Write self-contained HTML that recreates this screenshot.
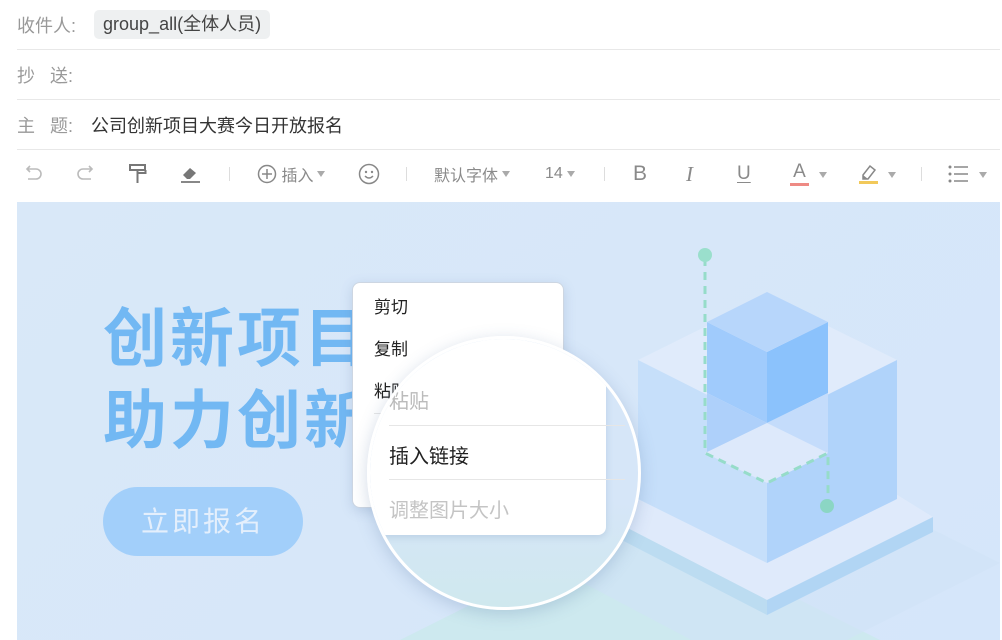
<!DOCTYPE html>
<html><head><meta charset="utf-8"><style>
*{margin:0;padding:0;box-sizing:border-box}
html,body{width:1002px;height:640px;overflow:hidden}
body{background:#fff;font-family:"Liberation Sans","Noto Sans CJK SC",sans-serif;position:relative;color:#333}
.row{position:absolute;left:17px;width:983px;height:50px;border-bottom:1px solid #e8e8e8;font-size:18px;color:#999;display:flex;align-items:center}
.tag{background:#eef0f1;color:#444;border-radius:5px;padding:0 9px;height:29px;line-height:29px;margin-left:18px;font-size:18px}
.tb{position:absolute;top:150px;left:0;width:1002px;height:50px;color:#8a8a8a;font-size:16px}
.tb>*{position:absolute;top:0;height:48px;display:flex;align-items:center}
.sep{width:1px;height:14px!important;top:17px!important;background:#ddd}
.ar{display:inline-block;border-left:4px solid transparent;border-right:4px solid transparent;border-top:6px solid #aaa;margin-left:4px}
.ban{position:absolute;left:17px;top:202px;width:983px;height:438px;background:linear-gradient(135deg,#d9e8f8,#d5e6fa);overflow:hidden}
.big{position:absolute;left:86px;font-size:64px;font-weight:bold;color:#72b8f3;letter-spacing:3px;line-height:82px}
.btn{position:absolute;left:86px;top:285px;width:200px;height:69px;border-radius:35px;background:#a2cffa;color:#e4effc;font-size:28px;text-align:center;line-height:69px;letter-spacing:3px}
.menu{position:absolute;left:352px;top:282px;width:212px;height:226px;background:#fff;border-radius:8px;border:1px solid #cdd6e2;box-shadow:0 3px 12px rgba(80,110,160,.2);font-size:17px;color:#222}
.menu div{position:absolute;left:21px}
.hr{position:absolute;left:0;width:100%;height:1px;background:#e6e6e6}
.mag{position:absolute;left:367px;top:336px;width:274px;height:274px;border-radius:50%;border:3px solid #fff;overflow:hidden;box-shadow:0 4px 16px rgba(80,110,160,.25);background:linear-gradient(180deg,#d6e6f8 60%,#cfe8ee)}
.zm{position:absolute;left:0;top:-2px;width:236px;height:198px;background:#fff;border-radius:8px;box-shadow:0 2px 8px rgba(80,110,160,.2);font-size:20px}
.zm div{position:absolute;left:19px}
</style></head><body>
<div class="row" style="top:0">收件人:<span class="tag">group_all(全体人员)</span></div>
<div class="row" style="top:50px">抄&nbsp;&nbsp;&nbsp;送:</div>
<div class="row" style="top:100px">主&nbsp;&nbsp;&nbsp;题:<span style="color:#333;margin-left:18px">公司创新项目大赛今日开放报名</span></div>
<div class="tb">
<svg style="left:22px;top:14px;height:20px" width="22" height="20" viewBox="0 0 22 20"><path d="M5 5h9a5 5 0 0 1 0 10H6M8 2L5 5l3 3" fill="none" stroke="#bbb" stroke-width="1.6"/></svg>
<svg style="left:75px;top:14px;height:20px" width="22" height="20" viewBox="0 0 22 20"><path d="M17 5H8a5 5 0 0 0 0 10h8M14 2l3 3-3 3" fill="none" stroke="#bbb" stroke-width="1.6"/></svg>
<svg style="left:128px;top:13px;height:22px" width="22" height="22" viewBox="0 0 22 22"><path d="M2 2h15v5H2zM9.5 7v3h8V7M9.5 10v10" fill="none" stroke="#777" stroke-width="2"/></svg>
<svg style="left:180px;top:13px;height:22px" width="22" height="22" viewBox="0 0 22 22"><path d="M3 12l7-7 6 5-6 6H7z" fill="#777"/><path d="M1 19h19" stroke="#777" stroke-width="1.8"/></svg>
<span class="sep" style="left:229px"></span>
<span style="left:257px"><svg width="20" height="20" viewBox="0 0 20 20"><circle cx="10" cy="10" r="8.5" fill="none" stroke="#888" stroke-width="1.5"/><path d="M10 5v10M5 10h10" stroke="#888" stroke-width="1.5"/></svg>&nbsp;插入<i class="ar"></i></span>
<svg style="left:358px;top:13px;height:22px" width="22" height="22" viewBox="0 0 22 22"><circle cx="11" cy="11" r="9.5" fill="none" stroke="#888" stroke-width="1.5"/><circle cx="8" cy="9" r="1.2" fill="#888"/><circle cx="14" cy="9" r="1.2" fill="#888"/><path d="M7 13q4 4 8 0" fill="none" stroke="#888" stroke-width="1.5"/></svg>
<span class="sep" style="left:406px"></span>
<span style="left:434px">默认字体<i class="ar"></i></span>
<span style="left:545px">14<i class="ar"></i></span>
<span class="sep" style="left:604px"></span>
<span style="left:633px;font-size:21px">B</span>
<span style="left:686px;font-size:21px;font-family:'Liberation Serif',serif;font-style:italic">I</span>
<span style="left:737px;font-size:19px;text-decoration:underline;text-underline-offset:3px">U</span>
<span style="left:790px;font-size:19px;flex-direction:column;justify-content:center;line-height:18px">A<i style="display:block;width:19px;height:3px;background:#ee8a84;margin-top:2px"></i></span>
<i class="ar" style="left:815px;top:22px;height:0"></i>
<svg style="left:858px;top:11px;height:24px" width="22" height="24" viewBox="0 0 22 24"><path d="M5 14l7-9 5 4-7 9H5z" fill="none" stroke="#888" stroke-width="1.5"/><path d="M5 14l5 4-5 0z" fill="#888"/><rect x="1" y="20" width="19" height="3" fill="#f2c95a"/></svg>
<i class="ar" style="left:884px;top:22px;height:0"></i>
<span class="sep" style="left:921px"></span>
<svg style="left:948px;top:14px;height:20px" width="22" height="20" viewBox="0 0 22 20"><g fill="#888"><circle cx="2" cy="3" r="1.5"/><circle cx="2" cy="10" r="1.5"/><circle cx="2" cy="17" r="1.5"/></g><path d="M6 3h14M6 10h14M6 17h14" stroke="#888" stroke-width="1.5"/></svg>
<i class="ar" style="left:975px;top:22px;height:0"></i>
</div>
<div class="ban">
<svg width="983" height="438" style="position:absolute;left:0;top:0" viewBox="17 202 983 438">
<path d="M400 640L640 520 1000 700" fill="#cde9ef"/>
<path d="M540 560L767 447 1000 563 767 680z" fill="#d1e2f7" opacity=".6"/>
<path d="M583 505L767 414 933 517 767 600z" fill="#dfeafb"/>
<path d="M583 505L767 600 767 615 583 520z" fill="#bcdcf1"/>
<path d="M933 517L767 600 767 615 933 532z" fill="#b1d5f4"/>
<path d="M638 360L767 296 897 360 767 425z" fill="#e0ebfb"/>
<path d="M638 360L767 425 767 563 638 499z" fill="#c6dffa"/>
<path d="M897 360L767 425 767 563 897 499z" fill="#b0d3fa"/>
<path d="M707 322L767 352 767 423 707 393z" fill="#a0cbfc"/>
<path d="M828 322L767 352 767 423 828 393z" fill="#8bc2fc"/>
<path d="M767 292L828 322 767 352 707 322z" fill="#b7d6fb"/>
<path d="M707 393L767 423 767 483 707 453z" fill="#aed0fa"/>
<path d="M828 393L767 423 767 483 828 453z" fill="#c4dcfb"/>
<path d="M705 453L767 423 828 453 767 483z" fill="#dde9fb"/>
<path d="M705 258V453L767 483 828 453V500" fill="none" stroke="#96dcc9" stroke-width="3" stroke-dasharray="8 6"/>
<circle cx="705" cy="255" r="7" fill="#9adfcc"/><circle cx="827" cy="506" r="7" fill="#8bd6c4"/>
</svg>
<div class="big" style="top:96px">创新项目<br>助力创新</div>
<div class="btn">立即报名</div>
</div>
<div class="menu">
<div style="top:10px">剪切</div><div style="top:52px">复制</div><div style="top:94px">粘贴</div>
<div class="hr" style="top:130px"></div><div class="hr" style="top:178px"></div>
</div>
<div class="mag"><div class="zm">
<div style="top:48px;color:#bbb">粘贴</div>
<div class="hr" style="top:88px"></div>
<div style="top:103px;color:#222">插入链接</div>
<div class="hr" style="top:142px"></div>
<div style="top:157px;color:#c4c4c4">调整图片大小</div>
</div></div>
</body></html>
